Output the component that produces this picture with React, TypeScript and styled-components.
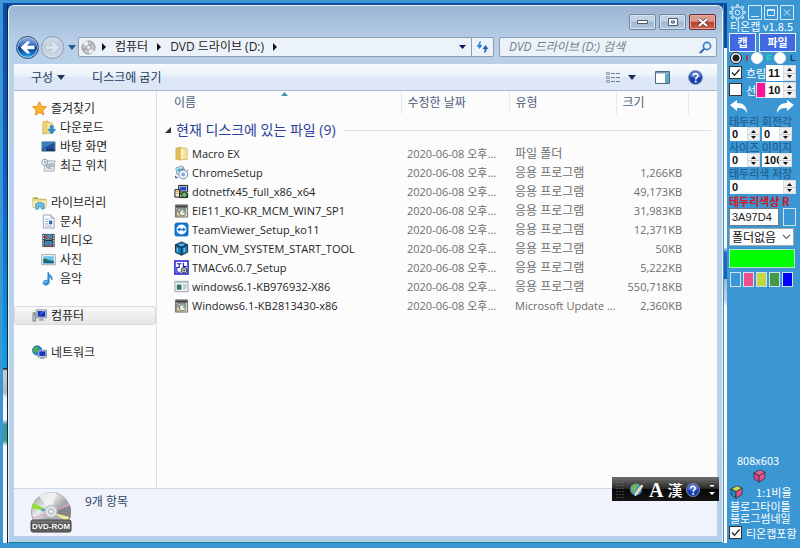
import React from "react";
import styled, { createGlobalStyle, css } from "styled-components";

const GlobalStyle = createGlobalStyle`
  *, *::before, *::after { box-sizing: border-box; }
  body {
    margin: 0;
    background: #3a97d4;
    font: 12px/18px "Open Sans", "Noto Sans CJK KR", sans-serif;
    color: #1e1e1e;
  }
  button, input, select { font: inherit; color: inherit; margin: 0; }
  button { border: 0; padding: 0; background: none; }
  svg { display: block; flex: none; }
`;

/* ---------- page ---------- */

const Page = styled.div`
  display: flex;
  min-height: 100vh;
  padding: 3px 0 5px 3px;
  background: #3a97d4;
`;

const Desktop = styled.main`
  position: relative;
  flex: 1;
  min-width: 0;
  display: grid;
  grid-template-columns: 5px minmax(0, 1fr) 4px;
  padding-top: 2px;
  background: #0a4b9f;
`;

const LeftStrip = styled.div`
  background: linear-gradient(#0b4aa6 0, #0c5bc4 30%, #0aa0ea 67.5%, #111 67.5%, #c8ccd0 68%, #b4babf 72%, #f4f6f7 73%, #f8f8f8 77%, #2f9aa8 78%, #3a9f8c 81%, #f7f9fa 82%);
  border-right: 1px solid #16263a;
`;

const RightStrip = styled.div`
  background: linear-gradient(#0a4191 0, #0b4fa8 8%, #f3f7fa 8%, #f7fafc 45%, #1b6fc8 46%, #1560bd 51%, #9fb9dc 51%, #c6d5ea 55%, #fafcfd 56%, #fafcfd 100%);
  border-left: 1px solid #4a8fae;
`;

/* ---------- explorer window ---------- */

const Window = styled.section`
  display: flex;
  flex-direction: column;
  min-width: 0;
  padding: 0 5px 6px 5px;
  border: 1px solid #e9f1f9;
  border-bottom: 1px solid #178391;
  border-radius: 6px 6px 0 0;
  background: linear-gradient(#9cb4d2 0, #b7cee8 34px, #bad1ea 62px, #b7d0e9 100%);
`;

const TitleBar = styled.header`
  display: flex;
  justify-content: flex-end;
  gap: 3px;
  height: 30px;
  padding: 8px 1px 0 0;
`;

const Caption = styled.button<{ $close?: boolean }>`
  display: grid;
  place-items: center;
  width: 27px;
  height: 16px;
  border: 1px solid ${(p) => (p.$close ? "#6e3038" : "#73869f")};
  border-radius: 2px;
  box-shadow: inset 0 0 0 1px ${(p) => (p.$close ? "#e6a99f" : "#d5e2f1")};
  background: ${(p) =>
    p.$close
      ? "linear-gradient(#d99a8c 0 45%, #b5402a 50%, #cf6148 100%)"
      : "linear-gradient(#c2d2e5 0 45%, #a0b5ce 50%, #b4c9e0 100%)"};
`;

const NavBar = styled.div`
  display: flex;
  align-items: center;
  height: 22px;
  padding-left: 2px;
`;

const NavButtons = styled.div`
  display: flex;
  align-items: center;
  gap: 2px;
  border-radius: 12px;
`;

const Round = styled.button<{ $dim?: boolean }>`
  display: grid;
  place-items: center;
  width: 23px;
  height: 23px;
  border-radius: 50%;
  border: 1px solid ${(p) => (p.$dim ? "#8798ae" : "#34516f")};
  box-shadow: inset 0 0 0 1px ${(p) => (p.$dim ? "#d3dfec" : "#a5c5ea")};
  background: ${(p) =>
    p.$dim
      ? "linear-gradient(#cfdbe8, #bccbdd 50%, #cfdcea)"
      : "linear-gradient(#8fb4e3 0, #2f62bb 45%, #08328d 50%, #1585d8 85%, #40c6f4 100%)"};
`;

const NavHistory = styled.button`
  display: grid;
  place-items: center;
  width: 12px;
  height: 20px;
`;

const field = css`
  display: flex;
  align-items: center;
  height: 20px;
  border: 1px solid #8c9bad;
  border-radius: 2px;
  background: #ecf2f9;
`;

const Address = styled.div`
  ${field}
  flex: 1;
  min-width: 0;
  padding-left: 2px;
`;

const Crumb = styled.button<{ $root?: boolean }>`
  padding: ${(p) => (p.$root ? "0 0 0 6px" : "0 9px")};
  white-space: nowrap;
`;

const AddressEnd = styled.div`
  display: flex;
  align-items: center;
  gap: 5px;
  height: 100%;
  margin-left: auto;
`;

const Refresh = styled.button`
  display: grid;
  place-items: center;
  width: 22px;
  height: 100%;
  border-left: 1px solid #8c9bad;
`;

const Search = styled.label`
  ${field}
  flex: 0 1 218px;
  margin-left: 5px;
  padding: 0 4px 0 9px;
  input {
    flex: 1;
    min-width: 0;
    border: 0;
    padding: 0;
    outline: 0;
    background: none;
  }
  input::placeholder { color: #75808c; font-style: italic; opacity: 1; }
`;

const Toolbar = styled.div`
  display: flex;
  align-items: center;
  height: 27px;
  margin-top: 6px;
  padding: 1px 14px 0 17px;
  border-bottom: 1px solid #a9b9cd;
  background: linear-gradient(#fafcfe 0, #e7f0f9 13px, #dce6f4 13px, #dde7f5 100%);
  color: #1e395b;
`;

const ToolButton = styled.button<{ $gap?: number }>`
  display: flex;
  align-items: center;
  gap: 4px;
  margin-right: ${(p) => p.$gap ?? 0}px;
  white-space: nowrap;
`;

const Spacer = styled.span`
  flex: 1;
`;

const Body = styled.div`
  flex: 1;
  display: flex;
  min-height: 0;
  background: #fcfcfc;
`;

const Tree = styled.nav`
  display: flex;
  flex-direction: column;
  gap: 18px;
  flex: none;
  width: 143px;
  padding-top: 8px;
  border-right: 1px solid #d3e2f3;
`;

const TreeGroup = styled.div`
  display: flex;
  flex-direction: column;
`;

const TreeLink = styled.a<{ $child?: boolean; $active?: boolean }>`
  display: flex;
  align-items: center;
  gap: 4px;
  height: 19px;
  padding-left: ${(p) => (p.$child ? 26 : 17)}px;
  border: 1px solid ${(p) => (p.$active ? "#d9d9d9" : "transparent")};
  border-radius: 3px;
  background: ${(p) => (p.$active ? "linear-gradient(#f8f8f8, #e5e5e5)" : "none")};
  color: #1e1e1e;
  text-decoration: none;
  white-space: nowrap;
`;

const FilePane = styled.div`
  flex: 1;
  min-width: 0;
`;

const Table = styled.table`
  width: 100%;
  table-layout: fixed;
  border-collapse: collapse;
`;

const HeadCell = styled.th<{ $first?: boolean }>`
  position: relative;
  height: 23px;
  padding: 1px 0 0 ${(p) => (p.$first ? 17 : 6)}px;
  border-right: 1px solid #e0eaf5;
  font-weight: 400;
  text-align: left;
  color: #4c607a;
  &:last-child { border-right: 0; }
`;

const SortMark = styled.svg`
  position: absolute;
  top: 1px;
  left: 124px;
`;

const GroupCell = styled.th`
  height: 30px;
  padding: 2px 6px 0 8px;
  font-weight: 400;
`;

const GroupTitle = styled.button`
  display: flex;
  align-items: center;
  gap: 5px;
  width: 100%;
  font-size: 14px;
  color: #2b3f9b;
  white-space: nowrap;
  &::after { content: ""; flex: 1; height: 1px; margin-left: 2px; background: #dcdfe4; }
`;

const Cell = styled.td<{ $right?: boolean; $latin?: boolean }>`
  height: 19px;
  padding: 0 ${(p) => (p.$right ? 6 : 0)}px 0 6px;
  overflow: hidden;
  white-space: nowrap;
  font-size: ${(p) => (p.$latin ? 11 : 12)}px;
  line-height: 18px;
  color: #6d6d6d;
  text-align: ${(p) => (p.$right ? "right" : "left")};
`;

const NameCell = styled(Cell)`
  padding: 0 0 0 17px;
  color: #1e1e1e;
`;

const FileName = styled.span`
  display: flex;
  align-items: center;
  gap: 3px;
`;

const Details = styled.footer`
  display: flex;
  gap: 13px;
  height: 48px;
  padding: 2px 16px;
  border-top: 1px solid #cbd9ea;
  background: #f0f3fb;
  color: #2b4566;
  span { padding-top: 2px; }
`;

const LanguageBar = styled.div`
  position: absolute;
  right: 8px;
  bottom: 42px;
  display: flex;
  align-items: center;
  gap: 4px;
  width: 107px;
  height: 24px;
  padding: 0 4px;
  border-top: 1px solid #666;
  background: linear-gradient(#6a6a6a 0, #2a2a2a 45%, #070707 50%, #161616 100%);
  color: #fff;
`;

const Glyph = styled.button<{ $latin?: boolean }>`
  font: ${(p) => (p.$latin ? '700 20px/20px "Liberation Serif", serif' : '500 15px/20px "Noto Sans CJK KR", sans-serif')};
`;

/* ---------- capture panel ---------- */

const Panel = styled.aside`
  display: flex;
  flex-direction: column;
  flex: none;
  width: 73px;
  padding: 1px 4px 0 2px;
  font: 11px/12px "Noto Sans CJK KR", sans-serif;
  color: #fff;
  white-space: nowrap;
`;

const Line = styled.div<{ $h: number; $gap?: number; $pad?: number }>`
  display: flex;
  align-items: center;
  flex: none;
  height: ${(p) => p.$h}px;
  gap: ${(p) => p.$gap ?? 0}px;
  padding-left: ${(p) => p.$pad ?? 0}px;
`;

const IconButton = styled.button`
  display: block;
`;

const Caps = styled.div<{ $red?: boolean }>`
  flex: none;
  height: 12px;
  font-weight: ${(p) => (p.$red ? 700 : 500)};
  color: ${(p) => (p.$red ? "#d3161f" : "#23628f")};
`;

const BlueButton = styled.button<{ $grow?: boolean }>`
  flex: ${(p) => (p.$grow ? "1" : "0 0 27px")};
  height: 19px;
  border: 1px solid #e9f2fb;
  background: #4169e1;
  font-weight: 700;
`;

const Radio = styled.input`
  appearance: none;
  flex: none;
  width: 12px;
  height: 12px;
  border: 1px solid #eee;
  border-radius: 50%;
  background: #fff;
  &:checked { border-color: #222; background: radial-gradient(#222 0 3px, #fff 4px); }
`;

const RadioLabel = styled.label<{ $color: string }>`
  display: flex;
  align-items: center;
  gap: 4px;
  font: 700 9px/12px "Liberation Sans", sans-serif;
  color: ${(p) => p.$color};
`;

const CheckLabel = styled.label`
  display: flex;
  align-items: center;
  gap: 4px;
  flex: 1;
`;

const CheckBox = styled.span`
  display: grid;
  flex: none;
  width: 13px;
  height: 13px;
  border: 1px solid #333;
  background: #fff;
  input { appearance: none; grid-area: 1 / 1; margin: 0; }
  svg { grid-area: 1 / 1; visibility: hidden; }
  input:checked + svg { visibility: visible; }
`;

const SpinBox = styled.span<{ $grow?: boolean; $h: number }>`
  display: flex;
  flex: ${(p) => (p.$grow ? "1" : "0 0 30px")};
  min-width: 0;
  height: ${(p) => p.$h}px;
  background: #fff;
  input {
    appearance: textfield;
    flex: 1;
    width: 0;
    min-width: 0;
    border: 0;
    padding: 0 0 0 2px;
    outline: 0;
    background: none;
    font: 700 11px/14px "Liberation Sans", sans-serif;
    color: #111;
  }
  input::-webkit-inner-spin-button { appearance: none; display: none; }
`;

const SpinKeys = styled.span`
  display: grid;
  grid-template-rows: 1fr 1fr;
  flex: 0 0 13px;
  border: 1px solid #d9dde1;
  background: #f0f0f0;
  button { display: grid; place-items: center; min-height: 0; }
  button + button { border-top: 1px solid #c4c9ce; }
`;

const HexInput = styled.input`
  flex: 1;
  min-width: 0;
  height: 18px;
  border: 1px solid #6d7b88;
  padding: 0 2px;
  background: #fff;
  color: #222;
  font: 11px/16px "Liberation Sans", sans-serif;
`;

const Swatch = styled.button<{ $c: string; $w: number; $h: number }>`
  flex: none;
  width: ${(p) => p.$w}px;
  height: ${(p) => p.$h}px;
  border: 1px solid #cfe2f2;
  background: ${(p) => p.$c};
`;

const SelectWrap = styled.div`
  position: relative;
  flex: none;
  margin: 2px 2px 3px 0;
  select {
    appearance: none;
    display: block;
    width: 100%;
    height: 18px;
    padding: 0 2px;
    border: 1px solid #a0a8b0;
    border-radius: 0;
    background: #fff;
    color: #111;
    font: 12px/16px "Noto Sans CJK KR", sans-serif;
  }
  svg { position: absolute; right: 3px; top: 6px; pointer-events: none; }
`;

const Preview = styled.div`
  flex: none;
  height: 19px;
  margin-right: 1px;
  border: 1px solid #b7e6c4;
  background: #00ff00;
`;

const PanelFoot = styled.div`
  display: flex;
  flex-direction: column;
  margin-top: auto;
  padding-bottom: 2px;
`;

/* ---------- icons ---------- */

const Tri = ({ d, w = 8, h = 8, fill = "#111" }: { d: string; w?: number; h?: number; fill?: string }) => (
  <svg width={w} height={h} viewBox={`0 0 ${w} ${h}`} aria-hidden="true">
    <path d={d} fill={fill} />
  </svg>
);
const Down = ({ fill = "#1b3355" }: { fill?: string }) => <Tri w={8} h={5} d="M0 0h8L4 5z" fill={fill} />;
const Right = () => <Tri w={4} h={8} d="M0 0l4 4-4 4z" />;

const Cube = ({ top = "#f0608f", left = "#e6407a", right = "#ec4f86" }: { top?: string; left?: string; right?: string }) => (
  <svg width="13" height="14" viewBox="0 0 13 14" aria-hidden="true" stroke="#20384f" strokeWidth=".8" strokeLinejoin="round">
    <path d="M.8 4L7 .8l5.2 2.4L6 6.6z" fill={top} />
    <path d="M.8 4L6 6.6v6.6L1.2 10z" fill={left} />
    <path d="M6 6.6l6.2-3.4-.4 6.4L6 13.2z" fill={right} />
  </svg>
);

const Help = ({ size = 15 }: { size?: number }) => (
  <svg width={size} height={size} viewBox="0 0 16 16" aria-hidden="true">
    <circle cx="8" cy="8" r="7.4" fill="#1c3fae" stroke="#8a9bc0" />
    <path d="M2 7a6 6 0 0 1 12 0c-3 2-9 2-12 0z" fill="#6f93e2" opacity=".6" />
    <path d="M5.6 6.2C5.6 3 10.6 3 10.6 6c0 1.8-2.4 2-2.4 4" fill="none" stroke="#fff" strokeWidth="1.8" />
    <circle cx="8.2" cy="12.2" r="1.1" fill="#fff" />
  </svg>
);

const Disc = () => (
  <svg width="15" height="15" viewBox="0 0 16 16" aria-hidden="true">
    <circle cx="8" cy="8" r="7" fill="#c3c6c9" stroke="#8e9499" />
    <path d="M8 8L2 4a7 7 0 0 1 5-3zM8 8l6 4a7 7 0 0 1-5 3z" fill="#eef0f1" />
    <path d="M8 8L11 2l2 2z" fill="#9fc28f" />
    <path d="M8 8L2 9l1 3z" fill="#c49cae" />
    <circle cx="8" cy="8" r="2.2" fill="#f7f7f7" stroke="#93989c" />
  </svg>
);

type IconName =
  | "star" | "download" | "desktop" | "recent" | "library" | "document" | "video" | "picture" | "music"
  | "computer" | "network" | "folder" | "chrome" | "dotnet" | "box" | "teamviewer" | "tion" | "tmac" | "window";

const drawings: Record<IconName, React.ReactNode> = {
  star: <path d="M8 .8l2.2 4.8 5.2.6-3.9 3.5 1.1 5.2L8 12.3l-4.6 2.6 1.1-5.2L.6 6.2l5.2-.6z" fill="#ffb52e" stroke="#e08218" strokeWidth=".9" />,
  download: (
    <>
      <path d="M2 2l5-1 2 2v11l-7 1z" fill="#f1d676" stroke="#c9a441" strokeWidth=".8" />
      <path d="M6 3h6v11H6z" fill="#f8e8a4" stroke="#d3b255" strokeWidth=".8" />
      <path d="M10 6h3v4h2.5l-4 5-4-5H10z" fill="#2f8fdc" stroke="#1769ad" strokeWidth=".7" />
    </>
  ),
  desktop: (
    <>
      <path d="M1 3h14v10H1z" fill="#1f4f97" stroke="#7b8ea5" />
      <path d="M1.5 10C6 9 10 6 14.5 3.5H1.5z" fill="#3f7cc8" />
      <path d="M1.5 11h13v1.5h-13z" fill="#10264d" />
      <path d="M2.5 11h3v1h-3z" fill="#5fd0f0" />
    </>
  ),
  recent: (
    <>
      <path d="M5 3h10l-1 11H3z" fill="#e4e8ec" stroke="#9aa4ae" strokeWidth=".8" />
      <path d="M6 7h3v3H6zM10 6h3v3h-3zM7 11h5" fill="#c1d3e3" stroke="#7c93a8" strokeWidth=".7" />
      <circle cx="4" cy="4.5" r="3.2" fill="#f4f7fa" stroke="#8695a5" />
      <path d="M4 2.8v2h1.5" fill="none" stroke="#47586a" strokeWidth=".8" />
    </>
  ),
  library: (
    <>
      <path d="M1 3h5l1 1.5h8V13H1z" fill="#efd57c" stroke="#c5a047" strokeWidth=".8" />
      <path d="M1 6h14v7H1z" fill="#f8e9ac" />
      <path d="M4 15V9.5Q8 6 13 9.5V15h-3v-3H7v3z" fill="#6fc0e6" stroke="#318cbd" strokeWidth=".8" />
      <path d="M3 3.5h3" stroke="#62b34a" strokeWidth="1.2" />
    </>
  ),
  document: (
    <>
      <path d="M2.5 1h8l3.5 3.5V15H2.5z" fill="#fbfcfd" stroke="#8796a8" strokeWidth=".9" />
      <path d="M10.5 1v3.5H14" fill="#d5e0ea" stroke="#8796a8" strokeWidth=".8" />
      <path d="M4.5 5.5h4M4.5 8h3M4.5 10.5h3M4.5 12.8h7" stroke="#8fb0d5" />
      <path d="M8.5 7H12v4H8.5z" fill="#2d66b4" />
    </>
  ),
  video: (
    <>
      <path d="M1.5 1h13v14h-13z" fill="#24323c" />
      <path d="M4 1.5h8v6H4z" fill="#4a90c4" />
      <path d="M4 8.5h8v6H4z" fill="#3a86c0" />
      <path d="M4 1.500l4 3-4 3zM4 14.500l4-3 4 3zM12 4l-4 3h4z" fill="#a8503c" />
      <path d="M2.7 2v12.5M13.3 2v12.5" stroke="#e8edf0" strokeWidth="1.2" strokeDasharray="1.5 1.3" />
    </>
  ),
  picture: (
    <>
      <path d="M.8 2.8h14.4v10.8H.8z" fill="#f8fafb" stroke="#8b9aa8" strokeWidth=".9" />
      <path d="M2.5 4.5h11V12h-11z" fill="#6ec3ec" />
      <path d="M2.5 7c4 0 6 3 11 2v3h-11z" fill="#1e6f62" />
      <path d="M2.5 10.5h11V12h-11z" fill="#1b5d9d" />
    </>
  ),
  music: (
    <>
      <path d="M7.5 1c.5 3.500 5.800 3.300 4 8.500C11.500 6.500 9 6 8.700 6v6c0 4-6.500 4-6.500.6 0-2.600 3.300-3.200 5-2.200z" fill="#2e9be0" stroke="#1a6cab" strokeWidth=".7" />
      <path d="M3.3 12.3c.5-1.300 2-1.500 3-1" fill="none" stroke="#b9e2f8" />
    </>
  ),
  computer: (
    <>
      <path d="M1 5h3v9H1z" fill="#b8bcc0" stroke="#6e757c" strokeWidth=".8" />
      <path d="M4.5 2h11v8.500h-11z" fill="#dfe3e6" stroke="#767e87" strokeWidth=".8" />
      <path d="M6 3.300h8.200v6H6z" fill="#1430b4" />
      <path d="M6 9.300l5-6h3.200z" fill="#4c6be0" />
      <path d="M8.5 10.500h3l1.500 3H7z" fill="#a5abb1" />
      <path d="M1.8 7h1.500" stroke="#4aa34c" />
    </>
  ),
  network: (
    <>
      <circle cx="5.5" cy="5.8" r="5" fill="#2c86d8" stroke="#1d5c9c" strokeWidth=".7" />
      <path d="M2 3c2-2 4-1 5 0s-1 2-1 3-3 1-4 3c-1-2-1-4 0-6z" fill="#49b04a" />
      <path d="M6.5 5.500h9v7.500h-9z" fill="#dde2e7" stroke="#6d7884" strokeWidth=".8" />
      <path d="M7.7 6.700h6.700v5H7.700z" fill="#1737bd" />
      <path d="M9.5 13h3l1 2h-5z" fill="#98a0a8" />
    </>
  ),
  folder: (
    <>
      <path d="M2 2.500l5-1.500v14l-5-1z" fill="#e2bd57" stroke="#c09a3c" strokeWidth=".6" />
      <path d="M6.500 2h5.500l2 1v11.500H6.500z" fill="#f7e29a" stroke="#cba74b" strokeWidth=".7" />
      <path d="M9 3v11" stroke="#fff5cb" strokeWidth="1.5" />
    </>
  ),
  chrome: (
    <>
      <path d="M2 3l7-2 2 3v6H3z" fill="#d6e4f2" stroke="#6b8cb2" strokeWidth=".8" />
      <path d="M4 4h5v3H4z" fill="#33b5d8" />
      <circle cx="9.8" cy="10" r="4.8" fill="#eef4fa" stroke="#7487a0" />
      <circle cx="9.8" cy="10" r="2" fill="#7fa8dc" />
      <path d="M1 11l4 3H1z" fill="#4a73ae" />
      <path d="M9 5.500l1-3M13 7l2-2" stroke="#556d8c" />
    </>
  ),
  dotnet: (
    <>
      <path d="M5 1.500h9.500v7H5z" fill="#c9ccd0" stroke="#111" />
      <path d="M6.500 3h6.500v4H6.500z" fill="#1c4dd0" />
      <path d="M1 6h5v8H1z" fill="#ececec" stroke="#111" />
      <path d="M6 10h8.500v4.500H6z" fill="#bfc3c7" stroke="#111" />
      <circle cx="11" cy="11.5" r="3" fill="#5bc05a" stroke="#111" strokeWidth=".8" />
      <path d="M2 8h3M2 10h3" stroke="#d7a51c" />
    </>
  ),
  box: (
    <>
      <path d="M1.500 2h13v13h-13z" fill="#d6d2c4" stroke="#6f6f6a" />
      <path d="M2 2.500h12v2.500H2z" fill="#3f4548" />
      <path d="M4 5.500h8v4H4z" fill="#aebcc4" stroke="#565e60" strokeWidth=".8" />
      <circle cx="9" cy="10.5" r="3.3" fill="#efeee6" stroke="#6c7066" />
      <path d="M9 10.500l2-2.500 1 2z" fill="#58a66b" />
      <path d="M2.500 6v8h3" fill="none" stroke="#8d7344" />
    </>
  ),
  teamviewer: (
    <>
      <rect x="1" y="1" width="14" height="14" rx="2" fill="#1276d8" stroke="#0b57a6" strokeWidth=".7" />
      <circle cx="8" cy="8" r="5.3" fill="#f7fbff" />
      <path d="M3.200 8l3-2.200v1.400h3.600V5.800l3 2.200-3 2.200V8.800H6.200v1.400z" fill="#1276d8" />
    </>
  ),
  tion: (
    <>
      <path d="M8 1l6.500 3v8L8 15.200 1.500 12V4z" fill="#1b7db7" stroke="#0b2c42" />
      <path d="M1.500 4L8 7l6.500-3M8 7v8" fill="none" stroke="#0b2c42" strokeWidth="1.3" />
      <path d="M3.500 7.500v4M11 7.500v4.500M5.500 3.500L8 4.800l2.500-1.300" fill="none" stroke="#78c9ee" strokeWidth="1.2" />
    </>
  ),
  tmac: (
    <>
      <path d="M1 1h14v14H1z" fill="#fff" stroke="#1a1ad0" strokeWidth="1.6" />
      <path d="M3 4h5M5.500 4v4H3v5h4M10 3v4h3.500" fill="none" stroke="#1a1ad0" strokeWidth="1.2" />
      <circle cx="10.8" cy="11" r="3" fill="#c9cdd3" stroke="#222" />
      <circle cx="10.8" cy="11" r=".9" fill="#222" />
    </>
  ),
  window: (
    <>
      <path d="M1 2.500h14v11H1z" fill="#f6f8f9" stroke="#8e9aa4" />
      <path d="M1.500 3h13v1.500h-13z" fill="#b9cbd9" />
      <path d="M3 6h5v5.500H3z" fill="#2d7567" />
      <path d="M9.500 6.500h4M9.500 8.500h4M9.500 10.500h3" stroke="#90a0ae" />
    </>
  ),
};

const Icon = ({ name }: { name: IconName }) => (
  <svg width="15" height="15" viewBox="0 0 16 16" aria-hidden="true">{drawings[name]}</svg>
);

const DvdRom = () => (
  <svg width="42" height="42" viewBox="0 0 42 42" role="img" aria-label="DVD-ROM">
    <defs>
      <linearGradient id="disc" x1="0" y1="0" x2="1" y2="1">
        <stop offset="0" stopColor="#8f9192" />
        <stop offset=".35" stopColor="#e9eaea" />
        <stop offset=".55" stopColor="#a4a6a7" />
        <stop offset="1" stopColor="#d4d6d6" />
      </linearGradient>
      <linearGradient id="plate" x1="0" y1="0" x2="0" y2="1">
        <stop offset="0" stopColor="#858585" />
        <stop offset=".5" stopColor="#484848" />
        <stop offset="1" stopColor="#6b6b6b" />
      </linearGradient>
    </defs>
    <circle cx="21" cy="21" r="19.5" fill="url(#disc)" stroke="#a5a8aa" />
    <path d="M21 21L9 5a20 20 0 0 1 17-3z" fill="#f5f6f6" opacity=".8" />
    <path d="M21 21l19-7q2 7 0 14z" fill="#717374" opacity=".7" />
    <path d="M21 21L3 12l-1 5z" fill="#8be02a" />
    <path d="M21 21l-9-4-1 3z" fill="#35b4c6" />
    <path d="M21 21L40 14M21 21L3 27" stroke="#e49bd0" strokeWidth="1.2" />
    <path d="M21 21l18 5-2 4z" fill="#f0ee9c" />
    <circle cx="21" cy="20.5" r="6" fill="#dfe3e8" stroke="#b6babe" />
    <circle cx="21" cy="20.5" r="2.3" fill="#fff" stroke="#9da1a5" />
    <rect x="1" y="29" width="40" height="12" rx="2" fill="url(#plate)" stroke="#3c3c3c" />
    <text x="21" y="38" textAnchor="middle" fill="#fff" fontSize="8" fontWeight="700" fontFamily="Liberation Sans">DVD-ROM</text>
  </svg>
);

/* ---------- data ---------- */

type TreeItem = { label: string; icon: IconName; child?: boolean; active?: boolean };
const tree: TreeItem[][] = [
  [
    { label: "즐겨찾기", icon: "star" },
    { label: "다운로드", icon: "download", child: true },
    { label: "바탕 화면", icon: "desktop", child: true },
    { label: "최근 위치", icon: "recent", child: true },
  ],
  [
    { label: "라이브러리", icon: "library" },
    { label: "문서", icon: "document", child: true },
    { label: "비디오", icon: "video", child: true },
    { label: "사진", icon: "picture", child: true },
    { label: "음악", icon: "music", child: true },
  ],
  [{ label: "컴퓨터", icon: "computer", active: true }],
  [{ label: "네트워크", icon: "network" }],
];

const APP = "응용 프로그램";
const files: { icon: IconName; name: string; type: string; size: string; latinType?: boolean }[] = [
  { icon: "folder", name: "Macro EX", type: "파일 폴더", size: "" },
  { icon: "chrome", name: "ChromeSetup", type: APP, size: "1,266KB" },
  { icon: "dotnet", name: "dotnetfx45_full_x86_x64", type: APP, size: "49,173KB" },
  { icon: "box", name: "EIE11_KO-KR_MCM_WIN7_SP1", type: APP, size: "31,983KB" },
  { icon: "teamviewer", name: "TeamViewer_Setup_ko11", type: APP, size: "12,371KB" },
  { icon: "tion", name: "TION_VM_SYSTEM_START_TOOL", type: APP, size: "50KB" },
  { icon: "tmac", name: "TMACv6.0.7_Setup", type: APP, size: "5,222KB" },
  { icon: "window", name: "windows6.1-KB976932-X86", type: APP, size: "550,718KB" },
  { icon: "box", name: "Windows6.1-KB2813430-x86", type: "Microsoft Update ...", size: "2,360KB", latinType: true },
];

/* ---------- parts ---------- */

const Spin = ({ label, value, grow, h = 14 }: { label: string; value: number; grow?: boolean; h?: number }) => (
  <SpinBox $grow={grow} $h={h}>
    <input type="number" aria-label={label} defaultValue={value} />
    <SpinKeys>
      <button aria-label={`${label} +`}><Tri w={5} h={3} d="M0 3l2.500-3L5 3z" /></button>
      <button aria-label={`${label} -`}><Tri w={5} h={3} d="M0 0h5L2.500 3z" /></button>
    </SpinKeys>
  </SpinBox>
);

const Check = ({ label, checked }: { label: string; checked?: boolean }) => (
  <CheckLabel>
    <CheckBox>
      <input type="checkbox" defaultChecked={checked} />
      <svg width="11" height="11" viewBox="0 0 11 11" aria-hidden="true">
        <path d="M2 5.500l2.500 2.800L9.500 2.500" fill="none" stroke="#222" strokeWidth="1.3" />
      </svg>
    </CheckBox>
    {label}
  </CheckLabel>
);

const Boxed = ({ d, label }: { d: string; label: string }) => (
  <IconButton aria-label={label}>
    <svg width="14" height="15" viewBox="0 0 14 15" fill="none" stroke="#d7eafa" aria-hidden="true">
      <path d="M.5.5h13v14H.5z" />
      <path d={d} />
    </svg>
  </IconButton>
);

const gearTeeth = Array.from({ length: 8 }, (_, i) => i * 45);

const CapturePanel = () => (
  <Panel>
    <Line $h={16} $gap={2}>
      <IconButton aria-label="설정">
        <svg width="17" height="17" viewBox="0 0 17 17" fill="none" stroke="#e2f1fc" aria-hidden="true">
          <circle cx="8.5" cy="8.5" r="5.5" />
          <circle cx="8.5" cy="8.5" r="2.4" />
          {gearTeeth.map((a) => (
            <path key={a} d="M7.200 3l.4-2.300h1.800L9.800 3" transform={`rotate(${a} 8.5 8.5)`} />
          ))}
        </svg>
      </IconButton>
      <Boxed label="최소화" d="M3 11.500h8" />
      <Boxed label="최대화" d="M3.500 4.500h7v6h-7zM3.500 5.500h7" />
      <Boxed label="닫기" d="M4 4.500l6 6M10 4.500l-6 6" />
    </Line>
    <Line $h={12} $pad={1}>티온캡 v1.8.5</Line>
    <Line $h={20} $gap={3}>
      <BlueButton>캡</BlueButton>
      <BlueButton $grow>파일</BlueButton>
    </Line>
    <Line $h={12} $gap={2} $pad={1}>
      <RadioLabel $color="#d3161f"><Radio type="radio" name="mode" defaultChecked />I</RadioLabel>
      <RadioLabel $color="#1fe0a0"><Radio type="radio" name="mode" />F</RadioLabel>
      <RadioLabel $color="#123a5c"><Radio type="radio" name="mode" />L</RadioLabel>
    </Line>
    <Line $h={17}>
      <Check label="흐림" checked />
      <Spin label="흐림 값" value={11} h={16} />
    </Line>
    <Line $h={17}>
      <Check label="선" />
      <Swatch $c="#ff1493" $w={10} $h={16} aria-label="선 색" />
      <Spin label="선 두께" value={10} h={16} />
    </Line>
    <Line $h={17} $gap={28} $pad={1}>
      <IconButton aria-label="실행 취소">
        <svg width="18" height="14" viewBox="0 0 18 14" aria-hidden="true">
          <path d="M0 5L7 0v3c6 0 10 3 10 10-2-4-5-5.500-10-5v3z" fill="#fff" />
        </svg>
      </IconButton>
      <IconButton aria-label="다시 실행">
        <svg width="18" height="14" viewBox="0 0 18 14" aria-hidden="true">
          <path d="M18 5l-7-5v3C5 3 1 6 1 13c2-4 5-5.500 10-5v3z" fill="#fff" />
        </svg>
      </IconButton>
    </Line>
    <Caps>테두리 회전각</Caps>
    <Line $h={14} $gap={2} $pad={1}>
      <Spin label="테두리" value={0} />
      <Spin label="회전각" value={0} />
    </Line>
    <Caps>사이즈 이미지</Caps>
    <Line $h={14} $gap={2} $pad={1}>
      <Spin label="사이즈" value={0} />
      <Spin label="이미지" value={100} />
    </Line>
    <Caps>테두리색 저장</Caps>
    <Line $h={16} $pad={1}>
      <Spin label="테두리색 저장" value={0} grow />
    </Line>
    <Caps $red>테두리색상 R</Caps>
    <Line $h={19} $gap={4}>
      <HexInput aria-label="테두리색상" defaultValue="3A97D4" />
      <Swatch $c="#3a97d4" $w={13} $h={18} aria-label="현재 색" />
    </Line>
    <SelectWrap>
      <select aria-label="폴더"><option>폴더없음</option></select>
      <svg width="9" height="6" viewBox="0 0 9 6" aria-hidden="true">
        <path d="M1 1l3.500 3.500L8 1" fill="none" stroke="#666" strokeWidth="1.2" />
      </svg>
    </SelectWrap>
    <Preview />
    <Line $h={22} $gap={2} $pad={1}>
      {["#3a97d4", "#ee4f8c", "#c3d840", "#459a45", "#0000ff"].map((c) => (
        <Swatch key={c} $c={c} $w={11} $h={15} aria-label={c} />
      ))}
    </Line>
    <PanelFoot>
      <Line $h={16} $pad={8}>808x603</Line>
      <Line $h={16} $pad={24}><Cube /></Line>
      <Line $h={15} $gap={13} $pad={1}><Cube top="#c9dd45" left="#2f86b5" />1:1비율</Line>
      <Line $h={13} $pad={1}>블로그타이틀</Line>
      <Line $h={12} $pad={1}>블로그썸네일</Line>
      <Line $h={17}><Check label="티온캡포함" checked /></Line>
    </PanelFoot>
  </Panel>
);

const Explorer = () => (
  <Window>
    <TitleBar>
      <Caption aria-label="최소화">
        <svg width="11" height="5" aria-hidden="true"><path d="M.5.5h10v3H.5z" fill="#fff" stroke="#4d5a6c" /></svg>
      </Caption>
      <Caption aria-label="최대화">
        <svg width="10" height="8" aria-hidden="true"><path d="M.5.5h9v7h-9zM3.500 3h3v2h-3z" fill="#fff" fillRule="evenodd" stroke="#4d5a6c" /></svg>
      </Caption>
      <Caption $close aria-label="닫기">
        <svg width="12" height="9" viewBox="0 0 12 9" aria-hidden="true">
          <path d="M2 1l8 7M10 1L2 8" stroke="#5e3640" strokeWidth="3.6" />
          <path d="M2 1l8 7M10 1L2 8" stroke="#fff" strokeWidth="2.2" />
        </svg>
      </Caption>
    </TitleBar>

    <NavBar>
      <NavButtons>
        <Round aria-label="뒤로">
          <svg width="15" height="13" viewBox="0 0 15 13" aria-hidden="true"><path d="M.5 6.500L7 .5h2.500v1.300L7 4.700h7.500v3.600H7l2.500 2.900v1.300H7z" fill="#fff" /></svg>
        </Round>
        <Round $dim aria-label="앞으로">
          <svg width="15" height="13" viewBox="0 0 15 13" aria-hidden="true"><path d="M14.500 6.500L8 .5H5.500v1.300L8 4.700H.5v3.600H8l-2.500 2.900v1.300H8z" fill="#dde6f0" stroke="#b2c1d2" strokeWidth=".6" /></svg>
        </Round>
        <NavHistory aria-label="최근 페이지"><Tri w={8} h={5} d="M0 0h8L4 5z" fill="#1c5c8e" /></NavHistory>
      </NavButtons>
      <Address>
        <Disc />
        <Crumb $root aria-label="루트"><Right /></Crumb>
        <Crumb>컴퓨터</Crumb>
        <Right />
        <Crumb>DVD 드라이브 (D:)</Crumb>
        <Right />
        <AddressEnd>
          <button aria-label="이전 위치"><Tri w={7} h={4} d="M0 0h7L3.500 4z" fill="#111166" /></button>
          <Refresh aria-label="새로 고침">
            <svg width="13" height="12" viewBox="0 0 13 12" aria-hidden="true">
              <path d="M5 0C3 .5 2.500 2 2.500 4H.5l3 4 3-4h-2C4.500 2 4.500 1 5 0z" fill="#2f8ad6" />
              <path d="M8 12c2-.5 2.500-2 2.500-4h2l-3-4-3 4h2c0 2 0 3-.5 4z" fill="#2563b8" />
            </svg>
          </Refresh>
        </AddressEnd>
      </Address>
      <Search>
        <input type="search" aria-label="검색" placeholder="DVD 드라이브 (D:) 검색" />
        <svg width="13" height="13" viewBox="0 0 13 13" fill="none" aria-hidden="true">
          <path d="M1.500 11.500l4-4" stroke="#3b6ea8" strokeWidth="2.2" strokeLinecap="round" />
          <circle cx="8" cy="5" r="3.6" stroke="#3f7fc1" strokeWidth="1.6" fill="#e2effb" />
        </svg>
      </Search>
    </NavBar>

    <Toolbar>
      <ToolButton $gap={27}>구성 <Down /></ToolButton>
      <ToolButton>디스크에 굽기</ToolButton>
      <Spacer />
      <ToolButton $gap={8} aria-label="보기">
        <svg width="14" height="12" viewBox="0 0 14 12" aria-hidden="true">
          <path d="M.5.5h3v2h-3zM.5 4.500h3v2h-3zM.5 8.500h3v2h-3z" fill="#d7dbe4" stroke="#7c8aa0" strokeWidth=".8" />
          <path d="M5 1.500h4M10 1.500h4M5 5.500h4M10 5.500h4M5 9.500h4M10 9.500h4" stroke="#6e7f99" />
        </svg>
      </ToolButton>
      <ToolButton $gap={19} aria-label="보기 옵션"><Down /></ToolButton>
      <ToolButton $gap={18} aria-label="미리 보기 창">
        <svg width="15" height="13" viewBox="0 0 15 13" aria-hidden="true">
          <path d="M.5.5h14v12H.5z" fill="#fff" stroke="#4b6a8a" />
          <path d="M1 1h13v1.500H1z" fill="#7d9ab5" />
          <path d="M10 2.500h4V12h-4z" fill="#58a9c4" />
        </svg>
      </ToolButton>
      <ToolButton aria-label="도움말"><Help /></ToolButton>
    </Toolbar>

    <Body>
      <Tree>
        {tree.map((group) => (
          <TreeGroup key={group[0].label}>
            {group.map((t) => (
              <TreeLink key={t.label} href="#" $child={t.child} $active={t.active}>
                <Icon name={t.icon} />
                {t.label}
              </TreeLink>
            ))}
          </TreeGroup>
        ))}
      </Tree>
      <FilePane>
        <Table>
          <colgroup>
            <col width="244" />
            <col width="108" />
            <col width="107" />
            <col width="72" />
            <col />
          </colgroup>
          <thead>
            <tr>
              <HeadCell $first>
                이름
                <SortMark width="7" height="4" aria-hidden="true"><path d="M0 4l3.500-4L7 4z" fill="#4d8fb5" /></SortMark>
              </HeadCell>
              <HeadCell>수정한 날짜</HeadCell>
              <HeadCell>유형</HeadCell>
              <HeadCell>크기</HeadCell>
              <HeadCell as="td" />
            </tr>
          </thead>
          <tbody>
            <tr>
              <GroupCell colSpan={5}>
                <GroupTitle><Tri w={6} h={6} d="M6 0v6H0z" fill="#333" />현재 디스크에 있는 파일 (9)</GroupTitle>
              </GroupCell>
            </tr>
            {files.map((f) => (
              <tr key={f.name}>
                <NameCell $latin><FileName><Icon name={f.icon} />{f.name}</FileName></NameCell>
                <Cell $latin>2020-06-08 오후...</Cell>
                <Cell $latin={f.latinType}>{f.type}</Cell>
                <Cell $latin $right>{f.size}</Cell>
                <Cell />
              </tr>
            ))}
          </tbody>
        </Table>
      </FilePane>
    </Body>

    <Details>
      <DvdRom />
      <span>9개 항목</span>
    </Details>
  </Window>
);

export default function App() {
  return (
    <>
      <GlobalStyle />
      <Page>
        <Desktop>
          <LeftStrip />
          <Explorer />
          <RightStrip />
          <LanguageBar>
            <svg width="8" height="16" viewBox="0 0 8 16" aria-hidden="true">
              <path d="M1 0v16M4 0v16M7 0v16" stroke="#777" strokeDasharray="1 2" />
            </svg>
            <IconButton aria-label="입력기">
              <svg width="17" height="16" viewBox="0 0 17 16" aria-hidden="true">
                <circle cx="8" cy="7.5" r="6" fill="#4a8dc2" />
                <path d="M3 5c2-3 6-4 8-2l-3 4-2 4c-2 0-3-3-3-6z" fill="#6fb65a" />
                <path d="M15 4l-6 8-2 2 .5-3 6-8z" fill="#f1d37a" stroke="#fff" strokeWidth=".7" />
              </svg>
            </IconButton>
            <Glyph $latin>A</Glyph>
            <Glyph>漢</Glyph>
            <IconButton aria-label="도움말"><Help size={14} /></IconButton>
            <Spacer />
            <IconButton aria-label="옵션">
              <svg width="6" height="12" viewBox="0 0 6 12" aria-hidden="true">
                <path d="M1 1h4v1.500H1zM0 8h6l-3 3z" fill="#fff" />
              </svg>
            </IconButton>
          </LanguageBar>
        </Desktop>
        <CapturePanel />
      </Page>
    </>
  );
}
